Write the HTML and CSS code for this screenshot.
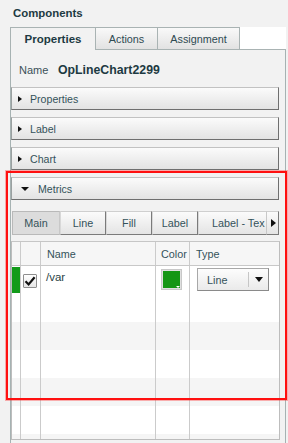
FILE: index.html
```html
<!DOCTYPE html>
<html>
<head>
<meta charset="utf-8">
<link rel="stylesheet" href="styles.css">
</head>
<body>
<div class="page">
  <div class="title">Components</div>
  <div class="panel">
    <div class="tabs">
      <div class="tab active">Properties</div>
      <div class="tab">Actions</div>
      <div class="tab last">Assignment</div>
      <div class="tab-fill"></div>
    </div>
    <div class="body">
      <div class="name-row"><span class="lbl">Name</span><span class="val">OpLineChart2299</span></div>
      <div class="acc"><span class="tri-r"></span><span>Properties</span></div>
      <div class="acc"><span class="tri-r"></span><span>Label</span></div>
      <div class="acc"><span class="tri-r"></span><span>Chart</span></div>
      <div class="acc open"><span class="tri-d"></span><span>Metrics</span></div>
      <div class="subtabs">
        <div class="stab sel w48">Main</div>
        <div class="stab w46">Line</div>
        <div class="stab w46">Fill</div>
        <div class="stab w46">Label</div>
        <div class="stab clip">Label - Tex</div>
        <div class="sarrow"><span class="tri-r"></span></div>
      </div>
      <div class="grid">
        <div class="row head">
          <div class="c"></div><div class="c"></div><div class="c txt">Name</div><div class="c txt">Color</div><div class="c txt last">Type</div>
        </div>
        <div class="row r28">
          <div class="c"><span class="gbar"></span></div>
          <div class="c"><span class="cb"><svg width="12" height="12" viewBox="0 0 12 12"><path d="M1.5 6.2 L4.6 9.4 L10.6 2.2" fill="none" stroke="#111" stroke-width="2.2" stroke-linejoin="miter"/></svg></span></div>
          <div class="c txt nm">/var</div>
          <div class="c"><span class="swatch"><span class="sw-arr"></span></span></div>
          <div class="c last"><span class="dd"><span class="dd-txt">Line</span><span class="dd-sep"></span><span class="dd-arr"></span></span></div>
        </div>
        <div class="row r28"><div class="c"></div><div class="c"></div><div class="c"></div><div class="c"></div><div class="c last"></div></div>
        <div class="row r28 alt"><div class="c"></div><div class="c"></div><div class="c"></div><div class="c"></div><div class="c last"></div></div>
        <div class="row r28"><div class="c"></div><div class="c"></div><div class="c"></div><div class="c"></div><div class="c last"></div></div>
        <div class="row r28 alt"><div class="c"></div><div class="c"></div><div class="c"></div><div class="c"></div><div class="c last"></div></div>
        <div class="row r28"><div class="c"></div><div class="c"></div><div class="c"></div><div class="c"></div><div class="c last"></div></div>
        <div class="row r5 alt"><div class="c"></div><div class="c"></div><div class="c"></div><div class="c"></div><div class="c last"></div></div>
      </div>
      <div class="tail"></div>
    </div>
  </div>
  <div class="highlight"></div>
</div>
</body>
</html>
```

FILE: styles.css
```css
* { box-sizing: border-box; }
html, body { margin: 0; padding: 0; }
body {
  background: #f2f2f2;
  font-family: "Liberation Sans", Arial, sans-serif;
  font-size: 11px;
  color: #2c464d;
  width: 288px;
  height: 443px;
  overflow: hidden;
}
.page { position: relative; width: 288px; height: 443px; }
.title {
  height: 27px;
  line-height: 26px;
  padding-left: 13px;
  font-weight: bold;
  font-size: 11.4px;
  color: #1d3a42;
}
.panel { margin-left: 10px; width: 276px; }
.tabs {
  display: flex;
  height: 23px;
  background: #ffffff;
}
.tab {
  height: 23px;
  border-top: 1px solid #a9b3b3;
  border-left: 1px solid #a9b3b3;
  border-bottom: 1px solid #a9b3b3;
  background: linear-gradient(#f9f9f9, #e2e2e2);
  display: flex;
  align-items: center;
  justify-content: center;
  color: #2e4a52;
  font-size: 10.8px;
}
.tab:nth-child(1) { width: 85px; }
.tab:nth-child(2) { width: 62px; }
.tab:nth-child(3) { width: 83px; }
.tab.last { border-right: 1px solid #a9b3b3; }
.tab.active {
  background: #f2f2f2;
  border-bottom: none;
  font-weight: bold;
  font-size: 11.5px;
  color: #1d3a42;
}
.tab-fill { flex: 1; border-bottom: 1px solid #a9b3b3; }
.body {
  background: #f2f2f2;
  border-left: 1px solid #a6b2b2;
  border-right: 1px solid #a6b2b2;
  height: 400px;
}
.name-row {
  height: 37px;
  padding-top: 3px;
  display: flex;
  align-items: center;
}
.lbl { margin-left: 8px; width: 39px; font-size: 11px; color: #3a5058; }
.val { font-weight: bold; font-size: 12.3px; color: #1d3a42; }
.acc {
  height: 23px;
  margin: 0 6px 7px 0;
  border-top: 1px solid #c2c2c2;
  border-left: 1px solid #9aa0a0;
  border-right: 1px solid #6f6f6f;
  border-bottom: 1px solid #6f6f6f;
  background: linear-gradient(#fbfbfb, #e3e3e3);
  display: flex;
  align-items: center;
  padding-left: 6px;
  color: #34525a;
  font-size: 10.6px;
}
.tri-r {
  width: 0; height: 0;
  border-top: 3.5px solid transparent;
  border-bottom: 3.5px solid transparent;
  border-left: 4px solid #111;
  margin-right: 8px;
  margin-left: 0px;
}
.acc.open { margin-bottom: 11px; }
.tri-d {
  width: 0; height: 0;
  border-left: 4px solid transparent;
  border-right: 4px solid transparent;
  border-top: 4px solid #111;
  margin-left: 3px;
  margin-right: 9px;
}
.subtabs {
  display: flex;
  height: 24px;
  margin-left: 1px;
  width: 267px;
  overflow: hidden;
}
.stab {
  height: 24px;
  border-top: 1px solid #cfcfcf;
  border-left: 1px solid #d8d8d8;
  border-right: 1px solid #7a7a7a;
  border-bottom: 1px solid #7a7a7a;
  background: linear-gradient(#fbfbfb, #e4e4e4);
  display: flex;
  align-items: center;
  justify-content: center;
  color: #34525a;
  font-size: 10.8px;
  white-space: nowrap;
  flex: none;
}
.stab.w48 { width: 48px; }
.stab.w46 { width: 46px; }
.stab.sel {
  background: #dcdcdc;
  border: 1px solid #b9b9b9;
  border-right-color: #c8c8c8;
}
.stab.clip {
  width: 68px;
  justify-content: flex-start;
  padding-left: 13px;
  border-right: none;
}
.sarrow {
  width: 13px;
  height: 24px;
  flex: none;
  border-top: 1px solid #cfcfcf;
  border-left: 1px solid #c8c8c8;
  border-right: 1px solid #7a7a7a;
  border-bottom: 1px solid #7a7a7a;
  background: linear-gradient(#fbfbfb, #e4e4e4);
  display: flex;
  align-items: center;
  justify-content: center;
}
.sarrow .tri-r { margin: 0 0 0 1px; border-left-width: 5px; border-top-width: 4px; border-bottom-width: 4px; }
.grid {
  margin-top: 6px;
  width: 269px;
  border: 1px solid #bdbdbd;
  border-top-color: #c6c6c6;
  background: #ffffff;
}
.row {
  display: grid;
  grid-template-columns: 9px 20px 115px 34px 1fr;
}
.row.head { height: 24px; background: #f6f6f6; border-bottom: 1px solid #c8c8c8; }
.row.r28 { height: 28px; background: #ffffff; }
.row.r5 { height: 5px; }
.row.alt { background: #f5f5f5; }
.c { border-right: 1px solid #cbcbcb; position: relative; }
.c.last { border-right: none; }
.c.txt { padding-left: 6px; display: flex; align-items: center; color: #34525a; font-size: 10.8px; }
.head .c.txt:nth-child(4) { padding-left: 5px; }
.c.nm { align-items: flex-start; padding-top: 5px; padding-left: 5px; font-size: 11.5px; color: #2a3f45; }
.gbar {
  position: absolute;
  left: 0; top: 1px;
  width: 8px; height: 26px;
  background: #129b1a;
}
.cb {
  position: absolute;
  left: 2px; top: 8px;
  width: 14px; height: 14px;
  border: 1px solid #8e8e8e;
  border-radius: 1px;
  background: linear-gradient(#ffffff, #e6e6e6);
  display: flex;
  align-items: center;
  justify-content: center;
}
.cb svg { display: block; }
.swatch {
  position: absolute;
  left: 5px; top: 3px;
  width: 21px; height: 21px;
  border: 1px solid #c8c8c8;
  background: #149614;
  box-shadow: inset 0 0 0 1px #e0e0e0;
}
.sw-arr {
  position: absolute;
  right: 1px; bottom: 1px;
  width: 0; height: 0;
  border-left: 2px solid transparent;
  border-right: 2px solid transparent;
  border-top: 2px solid #ffffff;
}
.dd {
  position: absolute;
  left: 7px; top: 2px;
  width: 72px; height: 23px;
  border: 1px solid #a8a8a8;
  border-right-color: #8a8a8a;
  border-bottom-color: #8a8a8a;
  background: linear-gradient(#fdfdfd, #eaeaea);
  display: flex;
  align-items: center;
}
.dd-txt { margin-left: 9px; width: 41px; color: #34525a; font-size: 10.8px; }
.dd-sep { width: 1px; height: 15px; background: #c6c6c6; }
.dd-arr {
  margin-left: 6px;
  width: 0; height: 0;
  border-left: 4px solid transparent;
  border-right: 4px solid transparent;
  border-top: 5px solid #111;
}
.highlight {
  position: absolute;
  left: 6px; top: 171px;
  width: 281px; height: 229px;
  border: 2px solid #ff1010;
  box-shadow: 0 0 0 1px rgba(255, 40, 40, 0.35);
  pointer-events: none;
}
```
